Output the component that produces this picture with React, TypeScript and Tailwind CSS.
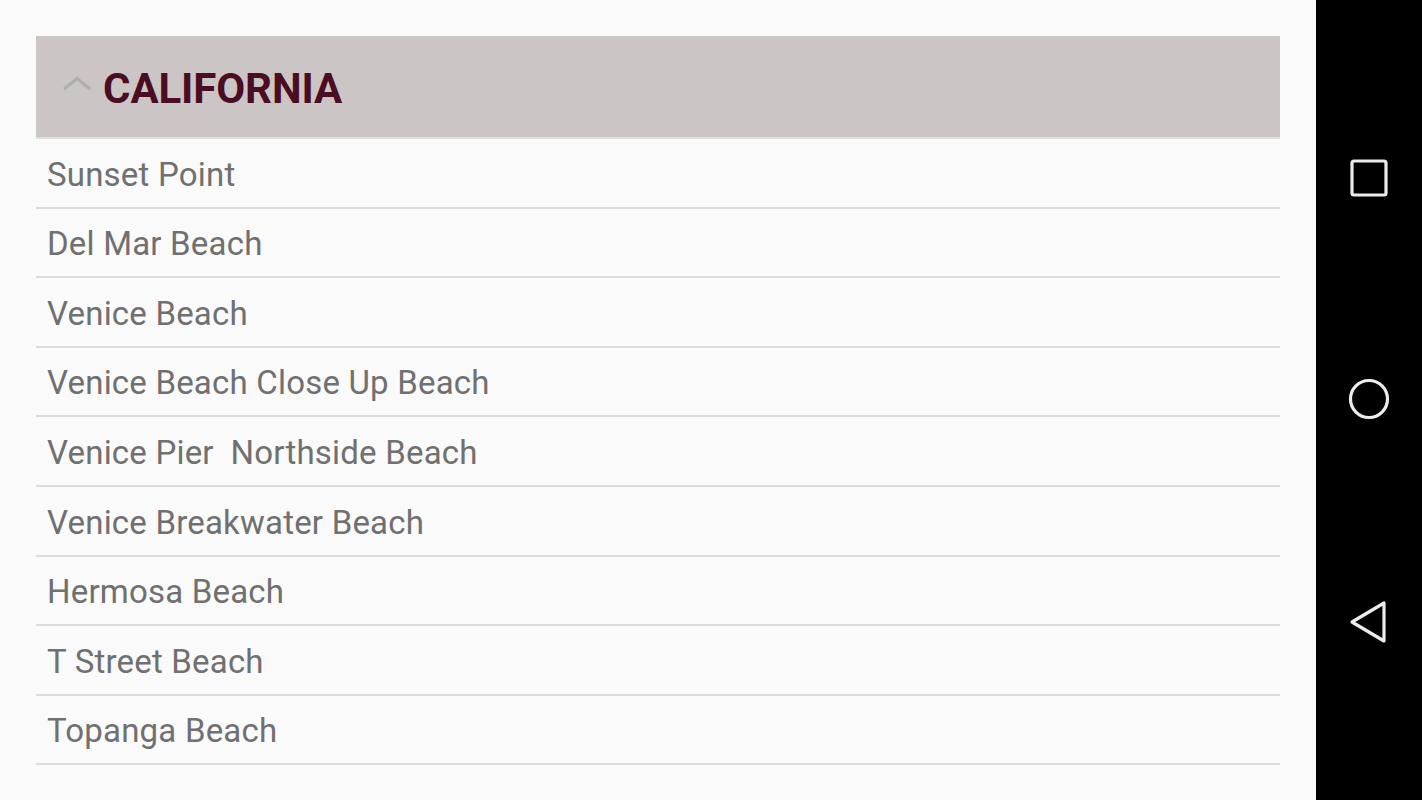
import React from 'react';

const beaches = [
  'Sunset Point',
  'Del Mar Beach',
  'Venice Beach',
  'Venice Beach Close Up Beach',
  'Venice Pier\u00a0 Northside Beach',
  'Venice Breakwater Beach',
  'Hermosa Beach',
  'T Street Beach',
  'Topanga Beach',
];

function NavBar() {
  return (
    <div className="w-[106px] h-full bg-black flex flex-col items-center justify-between py-[158px] pb-[156px]">
      <svg width="40" height="40" viewBox="0 0 40 40" fill="none">
        <rect x="3" y="3" width="34" height="34" rx="2" stroke="#ececec" strokeWidth="3.2" />
      </svg>
      <svg width="44" height="44" viewBox="0 0 44 44" fill="none">
        <circle cx="22" cy="22" r="18.5" stroke="#ececec" strokeWidth="3.2" />
      </svg>
      <svg width="40" height="44" viewBox="0 0 40 44" fill="none">
        <path d="M35 3 L35 41 L3 22 Z" stroke="#ececec" strokeWidth="3.2" strokeLinejoin="round" />
      </svg>
    </div>
  );
}

export default function App() {
  return (
    <div className="w-[1422px] h-[800px] flex bg-[#fafafa] font-['Roboto',sans-serif] overflow-hidden">
      <div className="flex-1 pl-9 pr-9 pt-9">
        <div className="h-[103px] bg-[#cbc6c5] border-b-2 border-[#e2e0df] flex items-center">
          <svg className="ml-[26px] mt-[-6px]" width="30" height="16" viewBox="0 0 30 16" fill="none">
            <path d="M2 13 L15 2.5 L28 13" stroke="#b1adac" strokeWidth="3" />
          </svg>
          <h1 className="ml-[11px] mt-[3px] text-[42px] font-bold text-[#4b0d22] tracking-[-0.1px]">CALIFORNIA</h1>
        </div>
        <ul>
          {beaches.map((b) => (
            <li
              key={b}
              className="h-[69.6px] border-b-2 border-[#dcdcdc] flex items-center pt-[3px] pl-[11px] text-[33px] tracking-[0.2px] text-[#707070] whitespace-pre"
            >
              {b}
            </li>
          ))}
        </ul>
      </div>
      <NavBar />
    </div>
  );
}
